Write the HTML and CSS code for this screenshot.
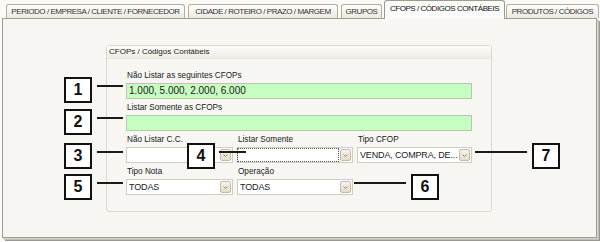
FILE: index.html
```html
<!DOCTYPE html>
<html>
 <head>
  <meta charset="utf-8">
  <title>Filtros - CFOPs</title>
  <link rel="stylesheet" href="styles.css">
 </head>
 <body>
  <div class="page">
   <div class="tabs">
    <div class="tab tab1">PERIODO / EMPRESA / CLIENTE / FORNECEDOR</div>
    <div class="tab tab2">CIDADE / ROTEIRO / PRAZO / MARGEM</div>
    <div class="tab tab3">GRUPOS</div>
    <div class="tab tab4 active">CFOPS / CÓDIGOS CONTÁBEIS</div>
    <div class="tab tab5">PRODUTOS / CÓDIGOS</div>
   </div>

   <div class="panel">
    <div class="group">
     <div class="group_title">CFOPs / Códigos Contábeis</div>
     <div class="group_body">
      <div class="field_block">
       <label class="lbl">Não Listar as seguintes CFOPs</label>
       <div class="green">1.000, 5.000, 2.000, 6.000</div>
      </div>
      <div class="field_block">
       <label class="lbl">Listar Somente as CFOPs</label>
       <div class="green"></div>
      </div>
      <div class="combo_row">
       <div class="field_block">
        <label class="lbl">Não Listar C.C.</label>
        <div class="combo"><span class="combo_text"></span><span class="combo_btn"><svg width="5" height="3" viewBox="0 0 5 3"><path d="M0.5 0.5 L2.5 2.5 L4.5 0.5" fill="none" stroke="#8c8272" stroke-width="1"/></svg></span></div>
       </div>
       <div class="field_block">
        <label class="lbl">Listar Somente</label>
        <div class="combo"><span class="combo_text focus"></span><span class="combo_btn"><svg width="5" height="3" viewBox="0 0 5 3"><path d="M0.5 0.5 L2.5 2.5 L4.5 0.5" fill="none" stroke="#8c8272" stroke-width="1"/></svg></span></div>
       </div>
       <div class="field_block">
        <label class="lbl">Tipo CFOP</label>
        <div class="combo"><span class="combo_text">VENDA, COMPRA, DE...</span><span class="combo_btn"><svg width="5" height="3" viewBox="0 0 5 3"><path d="M0.5 0.5 L2.5 2.5 L4.5 0.5" fill="none" stroke="#8c8272" stroke-width="1"/></svg></span></div>
       </div>
      </div>
      <div class="combo_row">
       <div class="field_block">
        <label class="lbl">Tipo Nota</label>
        <div class="combo"><span class="combo_text">TODAS</span><span class="combo_btn"><svg width="5" height="3" viewBox="0 0 5 3"><path d="M0.5 0.5 L2.5 2.5 L4.5 0.5" fill="none" stroke="#8c8272" stroke-width="1"/></svg></span></div>
       </div>
       <div class="field_block">
        <label class="lbl">Operação</label>
        <div class="combo"><span class="combo_text">TODAS</span><span class="combo_btn"><svg width="5" height="3" viewBox="0 0 5 3"><path d="M0.5 0.5 L2.5 2.5 L4.5 0.5" fill="none" stroke="#8c8272" stroke-width="1"/></svg></span></div>
       </div>
      </div>
     </div>
    </div>
   </div>

   <!-- marcadores numerados por cima do formulario -->
   <div class="mark" style="left:64px;top:77px">1</div>
   <div class="line" style="left:97px;top:85px;width:26px"></div>
   <div class="mark" style="left:64px;top:109px">2</div>
   <div class="line" style="left:97px;top:117px;width:26px"></div>
   <div class="mark" style="left:64px;top:143px">3</div>
   <div class="line" style="left:97px;top:151px;width:26px"></div>
   <div class="mark" style="left:187px;top:143px">4</div>
   <div class="line" style="left:219px;top:151px;width:27px"></div>
   <div class="mark" style="left:64px;top:174px">5</div>
   <div class="line" style="left:97px;top:182px;width:26px"></div>
   <div class="mark" style="left:411px;top:174px">6</div>
   <div class="line" style="left:354px;top:182px;width:52px"></div>
   <div class="mark" style="left:532px;top:143px">7</div>
   <div class="line" style="left:475px;top:151px;width:52px"></div>
  </div>
 </body>
</html>
```

FILE: styles.css
```css
body {
  margin:0;
  background-color:#fbfaf7;
  font-family:"Liberation Sans", Arial, sans-serif;
  color:#1a1a1a;
}

.page {
  position:relative;
  width:600px;
  height:242px;
  overflow:hidden;
}

.tabs {
  display:flex;
  align-items:flex-end;
  height:18px;
  padding-left:6px;
}

.tab {
  box-sizing:border-box;
  height:14px;
  border:1px solid #b3ae9f;
  border-bottom:none;
  border-radius:3px 3px 0 0;
  background:linear-gradient(#fefefd, #ece9e0);
  font-size:8px;
  letter-spacing:-0.45px;
  line-height:13px;
  text-align:center;
  color:#333;
  white-space:nowrap;
}

.tab1 { width:179px; }
.tab2 { width:150px; margin-left:3px; }
.tab3 { width:41px; margin-left:3px; }
.tab4 { width:121px; margin-left:2px; }
.tab5 { width:93px; margin-left:1px; }

.tab.active {
  height:19px;
  margin-bottom:-1px;
  position:relative;
  z-index:1;
  background:#fbfbf9;
  border-color:#9d9a8e;
  line-height:15px;
  color:#111;
}

.panel {
  box-sizing:border-box;
  margin:0 3px 0 2px;
  height:220px;
  border:1px solid #9f9c90;
  background-color:#f7f6f2;
  box-shadow:1px 1px 0 #d9d5ca, 2px 2px 0 #c2beb2, 3px 3px 0 #9a9890;
  padding:26px 0 0 103px;
}

.group {
  box-sizing:border-box;
  width:386px;
  height:167px;
  border:1px solid #ddd8cc;
  border-radius:3px;
}

.group_title {
  height:12px;
  line-height:12px;
  padding-left:2px;
  font-size:8px;
  background:linear-gradient(#fdfcfa, #efece4);
  border-bottom:1px solid #ebe7de;
}

.group_body {
  padding:12px 19px 0 19px;
}

.field_block {
  margin-bottom:4px;
}

.lbl {
  display:block;
  height:10px;
  line-height:10px;
  margin-bottom:2px;
  padding-left:1px;
  font-size:8.2px;
  white-space:nowrap;
}

.green {
  box-sizing:border-box;
  height:16px;
  border:1px solid #c0c2b2;
  background-color:#c6fdc1;
  font-size:10px;
  line-height:14px;
  padding-left:2px;
}

.combo_row {
  display:grid;
  grid-template-columns:107px 116px 115px;
  column-gap:4px;
}

.combo {
  box-sizing:border-box;
  display:flex;
  align-items:center;
  height:16px;
  border:1px solid #d0ccc0;
  background-color:#fff;
}

.combo_text {
  flex:1;
  align-self:stretch;
  font-size:9px;
  letter-spacing:-0.15px;
  line-height:14px;
  padding-left:2px;
  white-space:nowrap;
}

.combo_text.focus {
  border:1px dotted #555;
  margin:0 1px 0 -1px;
  height:14px;
  box-sizing:border-box;
}

.combo_btn {
  box-sizing:border-box;
  display:flex;
  align-items:center;
  justify-content:center;
  width:11px;
  height:12px;
  margin-right:1px;
  border:1px solid #c8b9a0;
  border-radius:2px;
  background:linear-gradient(#f6f3ec, #e3ddcf);
}

.mark {
  position:absolute;
  box-sizing:border-box;
  width:28px;
  height:26px;
  border:2px solid #111;
  background-color:#fff;
  font-size:16px;
  font-weight:bold;
  line-height:22px;
  text-align:center;
  color:#111;
}

.line {
  position:absolute;
  height:2px;
  background-color:#1a1a1a;
}
```
